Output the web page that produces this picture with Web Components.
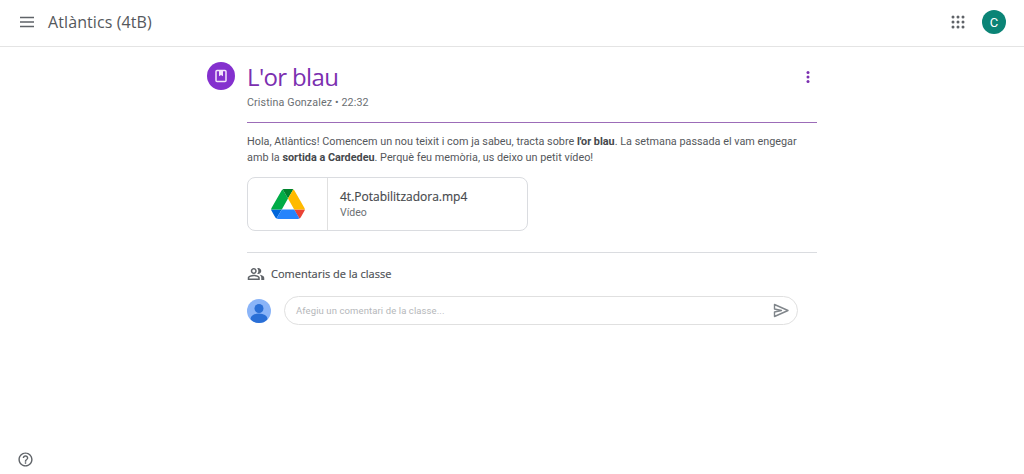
<!DOCTYPE html>
<html lang="ca">
<head>
<meta charset="utf-8">
<title>L'or blau</title>
<style>
  html, body { height: 100%; margin: 0; }
  body { background: #fff; color: #3c4043; font-family: Roboto, "Liberation Sans", sans-serif; overflow: hidden; }
  .page { height: 474px; display: flex; flex-direction: column; }
</style>
</head>
<body>
<div class="page">
  <class-header>Atlàntics (4tB)</class-header>
  <post-view>
    <span slot="title">L'or blau</span>
    <span slot="meta">Cristina Gonzalez • 22:32</span>
    Hola, Atlàntics! Comencem un nou teixit i com ja sabeu, tracta sobre <b>l'or blau</b>. La setmana passada el vam engegar amb la <b>sortida a Cardedeu</b>. Perquè feu memòria, us deixo un petit vídeo!
    <drive-attachment slot="attachment" name="4t.Potabilitzadora.mp4" kind="Vídeo"></drive-attachment>
    <class-comments slot="comments"></class-comments>
  </post-view>
  <help-button></help-button>
</div>

<script>
class ClassHeader extends HTMLElement {
  constructor() {
    super();
    this.attachShadow({ mode: "open" });
  }

  connectedCallback() {
    this.shadowRoot.innerHTML = `
      <style>
        :host {
          display: flex;
          align-items: center;
          flex: none;
          box-sizing: border-box;
          height: 47px;
          border-bottom: 1px solid #e4e4e4;
          padding: 0 18px 2px 19px;
        }
        .menu { width: 16px; height: 12px; flex: none; }
        .name {
          flex: 1;
          margin: 0 0 1px 13px;
          font: 400 16px "Open Sans", sans-serif;
          color: #55585c;
          letter-spacing: 0.1px;
        }
        .apps { width: 14px; height: 14px; flex: none; margin-right: 17px; }
        .avatar {
          width: 24px;
          height: 24px;
          border-radius: 50%;
          background: #0b8476;
          color: #fff;
          font: 400 13px Roboto, sans-serif;
          display: flex;
          align-items: center;
          justify-content: center;
        }
      </style>
      <svg class="menu" viewBox="0 0 16 12"><path d="M1 1.5h14M1 6h14M1 10.5h14" stroke="#5f6368" stroke-width="1.5" fill="none"/></svg>
      <div class="name"><slot></slot></div>
      <svg class="apps" viewBox="0 0 14 14" fill="#5f6368">
        <circle cx="2" cy="2" r="1.5"/><circle cx="7" cy="2" r="1.5"/><circle cx="12" cy="2" r="1.5"/>
        <circle cx="2" cy="7" r="1.5"/><circle cx="7" cy="7" r="1.5"/><circle cx="12" cy="7" r="1.5"/>
        <circle cx="2" cy="12" r="1.5"/><circle cx="7" cy="12" r="1.5"/><circle cx="12" cy="12" r="1.5"/>
      </svg>
      <div class="avatar">C</div>
    `;
  }
}

class PostView extends HTMLElement {
  constructor() {
    super();
    this.attachShadow({ mode: "open" });
  }

  connectedCallback() {
    this.shadowRoot.innerHTML = `
      <style>
        :host {
          display: flex;
          flex: 1;
          align-items: flex-start;
          gap: 12px;
          padding: 15px 0 0 207px;
        }
        .badge {
          width: 28px;
          height: 28px;
          border-radius: 50%;
          background: #8430ce;
          flex: none;
          display: flex;
          align-items: center;
          justify-content: center;
        }
        .badge svg { width: 14px; height: 14px; }
        .body { width: 570px; }
        .top { display: flex; justify-content: space-between; height: 60px; border-bottom: 1px solid #9c6cb8; }
        .title {
          font: 400 24px/30px "Open Sans", sans-serif;
          letter-spacing: -0.65px;
          color: #7b2fb0;
          height: 30px;
        }
        .meta { font-size: 10.7px; line-height: 16px; color: #6b6f73; margin-top: 3px; letter-spacing: 0.12px; }
        .more { width: 18px; height: 18px; margin: 7px 0 0 0; flex: none; }
        .text { font-size: 10.83px; line-height: 16px; color: #55585c; margin-top: 11px; width: 560px; }
        ::slotted(b) { color: #45484c; }
      </style>
      <div class="badge">
        <svg viewBox="0 0 14 14">
          <rect x="2" y="1.5" width="10" height="11" rx="1" fill="none" stroke="#f3e4fb" stroke-width="1.5"/>
          <path d="M5 2v5.2l2-1.2 2 1.2V2z" fill="#f3e4fb"/>
        </svg>
      </div>
      <div class="body">
        <div class="top">
          <div>
            <div class="title"><slot name="title"></slot></div>
            <div class="meta"><slot name="meta"></slot></div>
          </div>
          <svg class="more" viewBox="0 0 18 18" fill="#7b2fb0"><circle cx="9" cy="3.5" r="1.5"/><circle cx="9" cy="8" r="1.5"/><circle cx="9" cy="12.5" r="1.5"/></svg>
        </div>
        <div class="text"><slot></slot></div>
        <slot name="attachment"></slot>
        <slot name="comments"></slot>
      </div>
    `;
  }
}

class DriveAttachment extends HTMLElement {
  constructor() {
    super();
    this.attachShadow({ mode: "open" });
  }

  connectedCallback() {
    this.shadowRoot.innerHTML = `
      <style>
        :host {
          display: flex;
          width: 279px;
          height: 52px;
          margin-top: 11px;
          border: 1px solid #dadce0;
          border-radius: 8px;
        }
        .thumb {
          width: 79px;
          flex: none;
          border-right: 1px solid #e0e0e0;
          display: flex;
          align-items: center;
          justify-content: center;
        }
        .thumb svg { width: 34px; height: 30px; }
        .info { padding: 11px 0 0 12px; }
        .name { font: 500 12px/16px "Open Sans", sans-serif; color: #45484c; -webkit-text-stroke: 0.15px #45484c; }
        .kind { font-size: 10.5px; line-height: 16px; color: #6b6f73; }
      </style>
      <div class="thumb">
        <svg viewBox="0 0 87.3 78">
          <path d="m6.6 66.85 3.85 6.65c.8 1.4 1.95 2.5 3.3 3.3l13.75-23.8H0c0 1.55.4 3.1 1.2 4.5z" fill="#0066da"/>
          <path d="M43.65 25 29.9 1.2c-1.35.8-2.5 1.9-3.3 3.3L1.2 48.5A9 9 0 0 0 0 53h27.5z" fill="#00ac47"/>
          <path d="M73.55 76.8c1.35-.8 2.5-1.9 3.3-3.3l1.6-2.75 7.65-13.25c.8-1.4 1.2-2.95 1.2-4.5H59.8l5.85 11.5z" fill="#ea4335"/>
          <path d="M43.65 25 57.4 1.2C56.05.4 54.5 0 52.9 0H34.4c-1.6 0-3.15.45-4.5 1.2z" fill="#00832d"/>
          <path d="M59.8 53H27.5L13.75 76.8c1.35.8 2.9 1.2 4.5 1.2h50.8c1.6 0 3.15-.45 4.5-1.2z" fill="#2684fc"/>
          <path d="M73.4 26.5 60.7 4.5c-.8-1.4-1.95-2.5-3.3-3.3L43.65 25 59.8 53h27.45c0-1.55-.4-3.1-1.2-4.5z" fill="#ffba00"/>
        </svg>
      </div>
      <div class="info">
        <div class="name">${this.getAttribute("name")}</div>
        <div class="kind">${this.getAttribute("kind")}</div>
      </div>
    `;
  }
}

class ClassComments extends HTMLElement {
  constructor() {
    super();
    this.attachShadow({ mode: "open" });
  }

  connectedCallback() {
    this.shadowRoot.innerHTML = `
      <style>
        :host {
          display: block;
          margin-top: 21px;
          border-top: 1px solid #dadce0;
          padding-top: 12px;
        }
        .head { display: flex; align-items: center; gap: 6px; height: 18px; }
        .head svg { width: 18px; height: 18px; flex: none; }
        .head span { font: 500 11px "Open Sans", sans-serif; color: #4a4d51; -webkit-text-stroke: 0.15px #4a4d51; margin-bottom: 1px; }
        .row { display: flex; align-items: center; gap: 13px; margin-top: 13px; }
        .me { width: 24px; height: 24px; flex: none; }
        .input {
          width: 514px;
          height: 29px;
          border: 1px solid #e0e0e0;
          border-radius: 15px;
          display: flex;
          align-items: center;
          justify-content: space-between;
          padding: 0 7px 0 11px;
          box-sizing: border-box;
          font-size: 9.5px;
          color: #b5b7ba;
          letter-spacing: 0.1px;
        }
        .input svg { width: 17px; height: 15px; }
      </style>
      <div class="head">
        <svg viewBox="0 0 24 24" fill="#5f6368"><path d="M16.67 13.13C18.04 14.06 19 15.32 19 17v3h4v-3c0-2.18-3.57-3.47-6.33-3.87zM15 12c2.21 0 4-1.79 4-4s-1.79-4-4-4c-.47 0-.91.1-1.33.24a5.98 5.98 0 0 1 0 7.52c.42.14.86.24 1.33.24zM9 12c2.21 0 4-1.79 4-4s-1.79-4-4-4-4 1.79-4 4 1.79 4 4 4zm0-6c1.1 0 2 .9 2 2s-.9 2-2 2-2-.9-2-2 .9-2 2-2zM9 13c-2.67 0-8 1.34-8 4v3h16v-3c0-2.66-5.33-4-8-4zm6 5H3v-.99C3.2 16.29 6.3 15 9 15s5.8 1.29 6 2v1z"/></svg>
        <span>Comentaris de la classe</span>
      </div>
      <div class="row">
        <svg class="me" viewBox="0 0 24 24">
          <defs><clipPath id="c"><circle cx="12" cy="12" r="12"/></clipPath></defs>
          <g clip-path="url(#c)">
            <rect width="24" height="24" fill="#8ab4f8"/>
            <circle cx="12" cy="9.5" r="4.5" fill="#2a6fd6"/>
            <ellipse cx="12" cy="20" rx="8.5" ry="5.5" fill="#2a6fd6"/>
          </g>
        </svg>
        <div class="input">
          <span>Afegiu un comentari de la classe...</span>
          <svg viewBox="0 0 17 15"><path d="M1.5 1.5 15 7.5 1.5 13.5V9l7-1.5-7-1.5z" fill="none" stroke="#80868b" stroke-width="1.4" stroke-linejoin="round"/></svg>
        </div>
      </div>
    `;
  }
}

class HelpButton extends HTMLElement {
  constructor() {
    super();
    this.attachShadow({ mode: "open" });
  }

  connectedCallback() {
    this.shadowRoot.innerHTML = `
      <style>
        :host {
          position: absolute;
          left: 17px;
          top: 451px;
          width: 17px;
          height: 17px;
        }
        svg { display: block; width: 17px; height: 17px; }
      </style>
      <svg viewBox="0 0 24 24" fill="#5f6368"><path d="M11 18h2v-2h-2v2zm1-16C6.48 2 2 6.48 2 12s4.48 10 10 10 10-4.48 10-10S17.52 2 12 2zm0 18c-4.41 0-8-3.59-8-8s3.59-8 8-8 8 3.59 8 8-3.59 8-8 8zm0-14c-2.21 0-4 1.79-4 4h2c0-1.1.9-2 2-2s2 .9 2 2c0 2-3 1.75-3 5h2c0-2.25 3-2.5 3-5 0-2.21-1.79-4-4-4z"/></svg>
    `;
  }
}

customElements.define("class-header", ClassHeader);
customElements.define("post-view", PostView);
customElements.define("drive-attachment", DriveAttachment);
customElements.define("class-comments", ClassComments);
customElements.define("help-button", HelpButton);
</script>
</body>
</html>
